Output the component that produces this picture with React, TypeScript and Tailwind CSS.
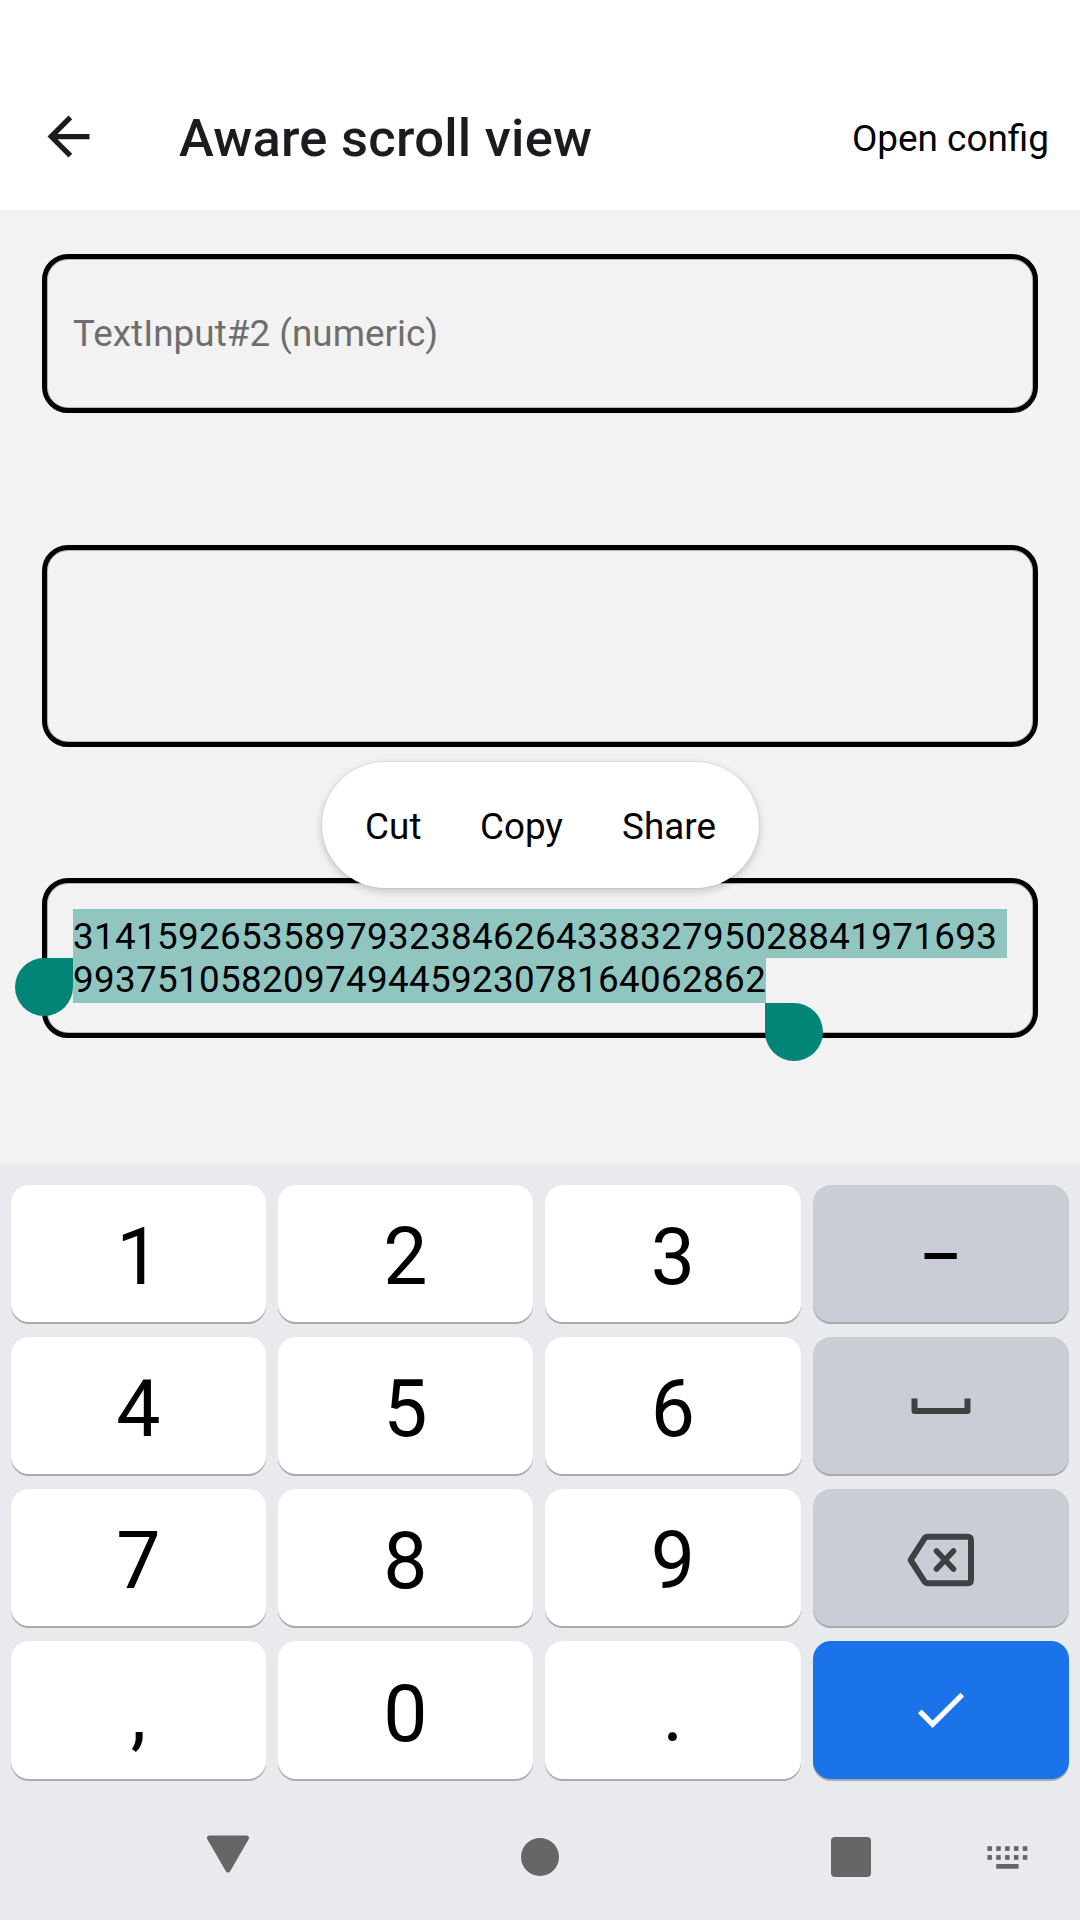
import type { ReactNode } from "react";

function BackArrow() {
  return (
    <svg width="63" height="63" viewBox="0 0 24 24" fill="#1c1b1f">
      <path d="M20 11H7.83l5.59-5.59L12 4l-8 8 8 8 1.41-1.41L7.83 13H20v-2z" />
    </svg>
  );
}

function Field({ className, children }: { className: string; children?: ReactNode }) {
  return (
    <div
      className={`relative mx-[42px] rounded-[26px] border-[5px] border-black shadow-[inset_0_0_0_1px_#b5b5b5] ${className}`}
    >
      {children}
    </div>
  );
}

function SelectionMenu() {
  return (
    <div className="absolute top-[-121px] left-[275px] flex h-[126px] w-[437px] rounded-full bg-white pt-[2px] pl-[43px] text-[36.75px] leading-[126px] tracking-[0.1px] whitespace-nowrap shadow-[0_3px_8px_rgba(0,0,0,0.2),0_0_2px_rgba(0,0,0,0.12)]">
      <span className="w-[115px]">Cut</span>
      <span className="w-[142px]">Copy</span>
      <span>Share</span>
    </div>
  );
}

function Key({ children, tone = "light" }: { children: ReactNode; tone?: "light" | "gray" | "blue" }) {
  const bg = tone === "light" ? "bg-white" : tone === "gray" ? "bg-[#cbcdd6]" : "bg-[#1a73e8]";
  return (
    <div
      className={`flex items-center justify-center rounded-[18px] text-[78.75px] leading-[144px] shadow-[0_2px_0_#a9abae] ${bg}`}
    >
      {children}
    </div>
  );
}

function Label({ children, low = false }: { children: string; low?: boolean }) {
  return <span className={low ? "pt-[7px]" : "pt-[6px]"}>{children}</span>;
}

function SpaceIcon() {
  return (
    <svg className="mt-[2px]" width="60" height="17" viewBox="0 0 60 17" fill="none" stroke="#3f4041" strokeWidth="6" strokeLinejoin="round">
      <path d="M3.5 0.5V13H56.5V0.5" />
    </svg>
  );
}

function BackspaceIcon() {
  return (
    <svg className="mt-[4px] mr-px" width="68" height="54" viewBox="0 0 68 54" fill="none" stroke="#3f4041" strokeWidth="6" strokeLinejoin="round">
      <path d="M20.5 3.8H60.5Q64 3.8 64 7.3V46.7Q64 50.2 60.5 50.2H20.5Q18.6 50.2 17.4 48.4L3.6 27L17.4 5.6Q18.6 3.8 20.5 3.8Z" />
      <path d="M29.5 18L46.5 36M46.5 18L29.5 36" strokeLinecap="round" strokeWidth="5.6" />
    </svg>
  );
}

function CheckIcon() {
  return (
    <svg className="mr-[2px] mb-[1px]" width="63" height="63" viewBox="0 0 24 24" fill="#fff">
      <path d="M9 16.17L4.83 12l-1.42 1.41L9 19 21 7l-1.41-1.41z" />
    </svg>
  );
}

function KeyboardIcon() {
  const cols = [0, 1, 2, 3, 4];
  return (
    <svg width="41" height="23" viewBox="0 0 41 23" fill="#666">
      {cols.map((c) => (
        <g key={c}>
          <rect x={0.4 + c * 8.85} y="0.2" width="4.5" height="4.7" />
          <rect x={0.4 + c * 8.85} y="9.1" width="4.5" height="4.7" />
        </g>
      ))}
      <rect x="9.2" y="18" width="22.4" height="4.7" />
    </svg>
  );
}

export default function App() {
  return (
    <div className="flex h-[1920px] w-[1080px] flex-col overflow-hidden bg-[#f2f2f2] font-[Roboto,sans-serif] text-black">
      <header className="flex h-[210px] shrink-0 items-center bg-white pt-[63px] pr-[31px] pl-[37px] shadow-[0_2px_6px_rgba(0,0,0,0.02)]">
        <BackArrow />
        <h1 className="ml-[79px] pt-[3px] text-[52.5px] leading-[62px] font-medium tracking-[0.26px] text-[#1c1b1f]">Aware scroll view</h1>
        <span className="ml-auto pt-[4px] text-[36.9px] leading-[44px]">Open config</span>
      </header>

      <main className="flex h-[958px] shrink-0 flex-col pt-[44px]">
        <Field className="h-[159px] pl-[26px] text-[36.75px] leading-[149px] tracking-[0.07px] text-[#6e6e6e]">
          TextInput#2 (numeric)
        </Field>
        <Field className="mt-[132px] h-[202px]" />
        <Field className="mt-[131px] h-[160px] pt-[26px] pl-[26px]">
          <div className="flex flex-col items-start text-[36.75px] tracking-[0.35px]">
            <div className="h-[49px] w-[934px] bg-[#91c6c0] pt-[3px] leading-[49px]">
              31415926535897932384626433832795028841971693
            </div>
            <div className="h-[45px] w-[693px] bg-[#91c6c0] leading-[43px]">
              993751058209749445923078164062862
            </div>
          </div>
          <div className="absolute top-[75px] left-[-32px] size-[58px] rounded-full rounded-tr-none bg-[#008577]" />
          <div className="absolute top-[120px] left-[718px] size-[58px] rounded-full rounded-tl-none bg-[#008577]" />
          <SelectionMenu />
        </Field>
      </main>

      <section className="flex grow flex-col bg-[#e8eaed] pt-[17px] shadow-[0_-2px_6px_rgba(0,0,0,0.06)]">
        <div className="grid grid-cols-[255px_255px_256px_256px] grid-rows-[137px_137px_137px_138px] gap-x-[12px] gap-y-[15px] px-[11px]">
          <Key><Label>1</Label></Key>
          <Key><Label>2</Label></Key>
          <Key><Label>3</Label></Key>
          <Key tone="gray">
            <span className="scale-x-[0.84] pt-[6px]">–</span>
          </Key>
          <Key><Label>4</Label></Key>
          <Key><Label>5</Label></Key>
          <Key><Label>6</Label></Key>
          <Key tone="gray"><SpaceIcon /></Key>
          <Key><Label>7</Label></Key>
          <Key><Label>8</Label></Key>
          <Key><Label>9</Label></Key>
          <Key tone="gray"><BackspaceIcon /></Key>
          <Key><Label low>,</Label></Key>
          <Key><Label low>0</Label></Key>
          <Key><Label low>.</Label></Key>
          <Key tone="blue"><CheckIcon /></Key>
        </div>

        <nav className="flex h-[134px] items-center pt-[22px] pl-[207px]">
          <svg className="mb-[6px]" width="42" height="38" viewBox="0 0 42 38" fill="#666" stroke="#666" strokeWidth="5" strokeLinejoin="round">
            <path d="M2.5 3H39.5L21 35Z" />
          </svg>
          <div className="ml-[272px] size-[38px] rounded-full bg-[#666]" />
          <div className="ml-[272px] size-[40px] rounded-[4px] bg-[#666]" />
          <div className="ml-[116px]"><KeyboardIcon /></div>
        </nav>
      </section>
    </div>
  );
}
